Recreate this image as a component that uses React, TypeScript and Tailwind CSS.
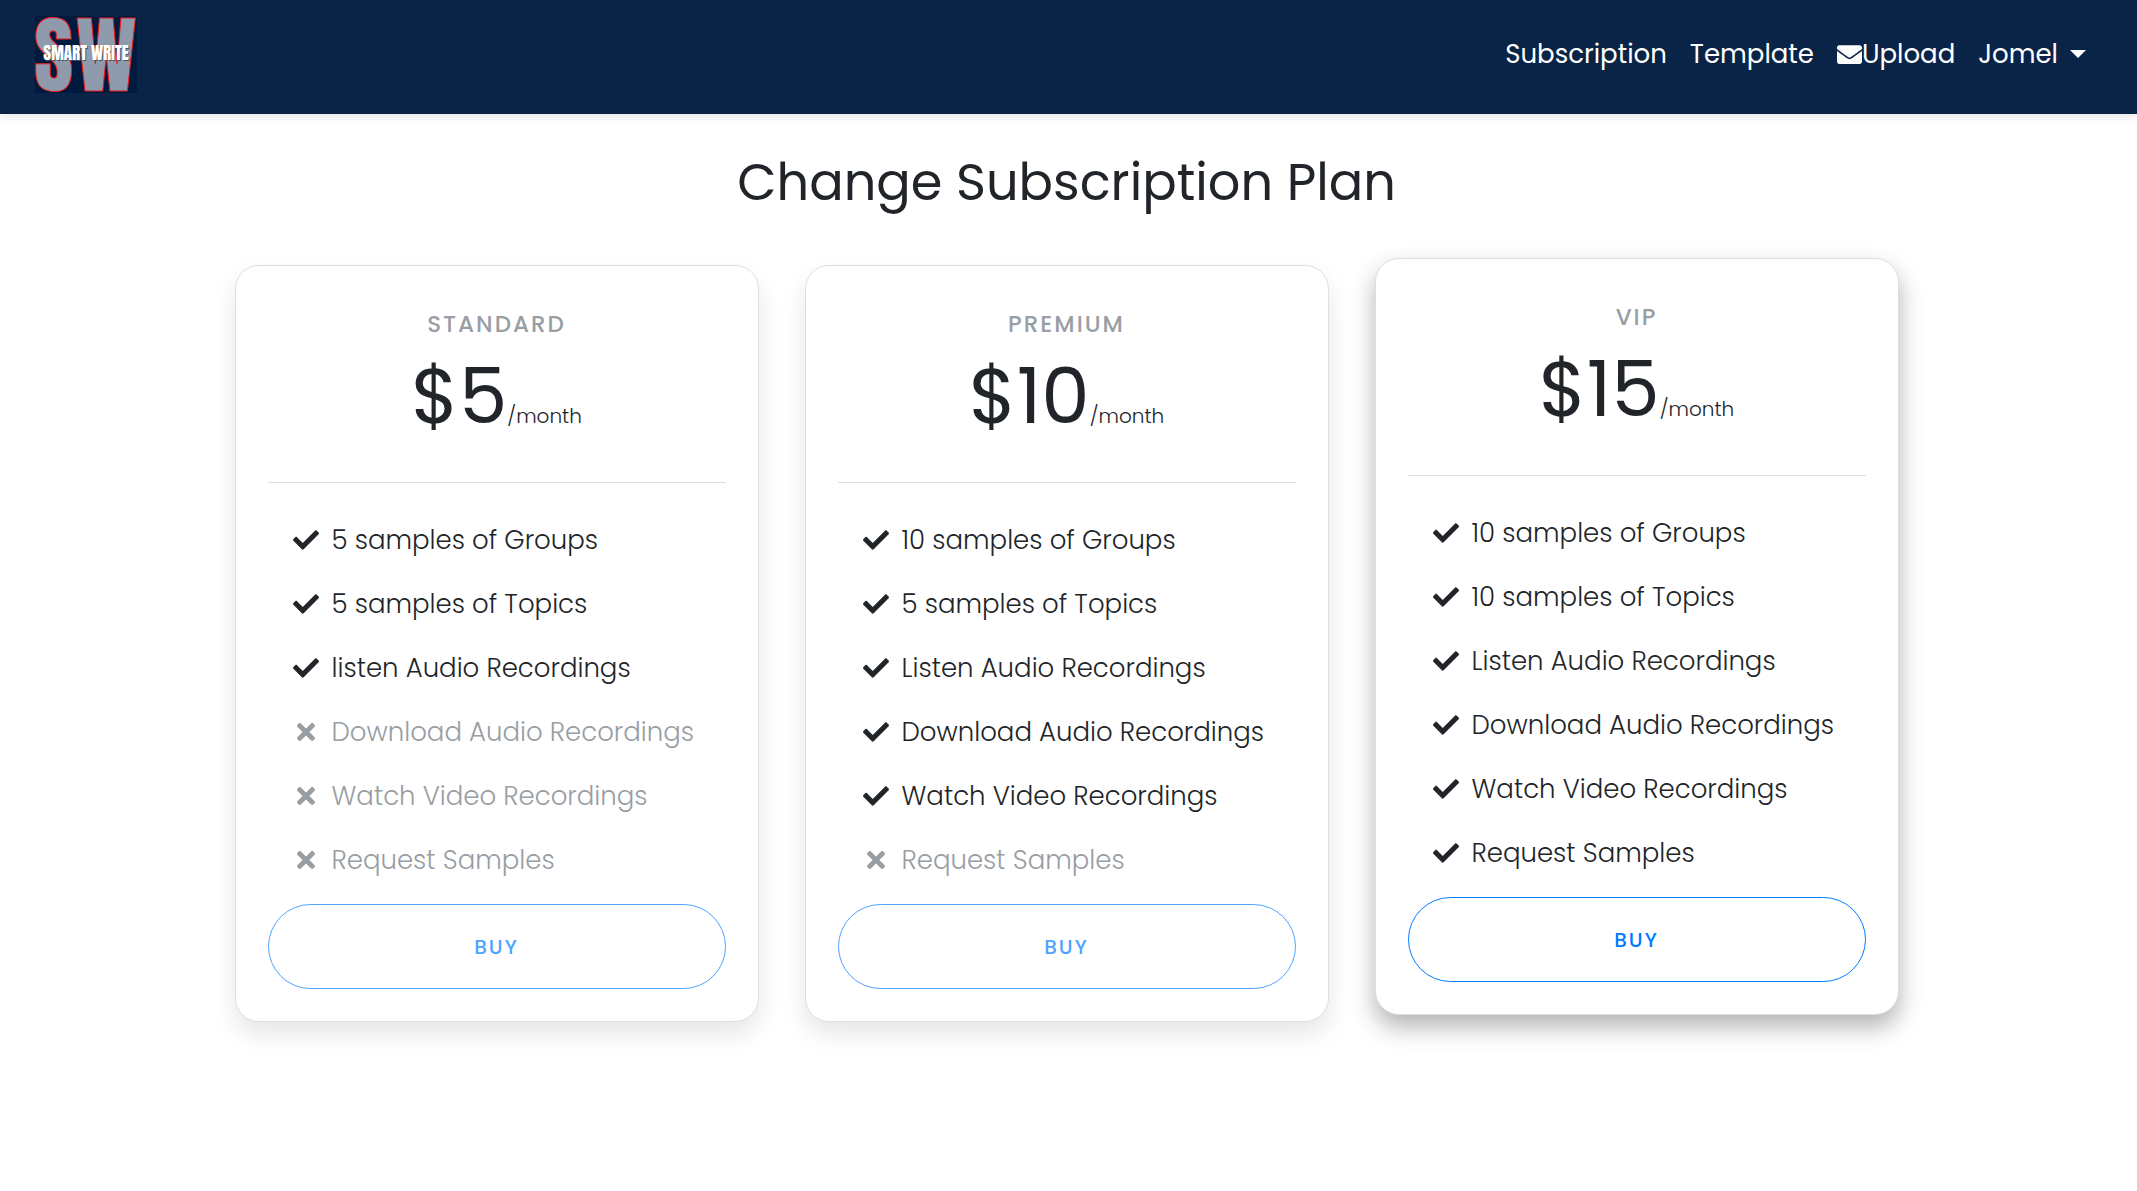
import React from "react";
import { FaCheck, FaTimes, FaEnvelope } from "react-icons/fa";

type Feature = { label: string; included: boolean };
type Plan = { name: string; price: string; features: Feature[]; active?: boolean };

const plans: Plan[] = [
  {
    name: "STANDARD",
    price: "$5",
    features: [
      { label: "5 samples of Groups", included: true },
      { label: "5 samples of Topics", included: true },
      { label: "listen Audio Recordings", included: true },
      { label: "Download Audio Recordings", included: false },
      { label: "Watch Video Recordings", included: false },
      { label: "Request Samples", included: false },
    ],
  },
  {
    name: "PREMIUM",
    price: "$10",
    features: [
      { label: "10 samples of Groups", included: true },
      { label: "5 samples of Topics", included: true },
      { label: "Listen Audio Recordings", included: true },
      { label: "Download Audio Recordings", included: true },
      { label: "Watch Video Recordings", included: true },
      { label: "Request Samples", included: false },
    ],
  },
  {
    name: "VIP",
    price: "$15",
    active: true,
    features: [
      { label: "10 samples of Groups", included: true },
      { label: "10 samples of Topics", included: true },
      { label: "Listen Audio Recordings", included: true },
      { label: "Download Audio Recordings", included: true },
      { label: "Watch Video Recordings", included: true },
      { label: "Request Samples", included: true },
    ],
  },
];

function Logo() {
  return (
    <svg viewBox="0 0 102 77" className="h-[77px] w-[102px]" role="img" aria-label="Smart Write">
      <rect width="102" height="77" fill="#001a3f" />
      <g
        className="font-['Anton','Impact','Roboto',sans-serif] font-normal"
        fill="#8f9aad"
        stroke="#f01818"
        strokeWidth="1"
        fontSize="85"
      >
        <text x="-1" y="75">S</text>
        <text x="41" y="75">W</text>
      </g>
      <text
        x="51"
        y="44"
        fontSize="17"
        textAnchor="middle"
        fill="#ffffff"
        className="font-['Anton','Impact','Roboto',sans-serif] font-normal [text-shadow:1px_1px_0_#4b5565]"
      >
        SMART WRITE
      </text>
    </svg>
  );
}

function PlanCard({ plan }: { plan: Plan }) {
  return (
    <article
      className={
        plan.active
          ? "relative -top-[7px] rounded-3xl border border-[#dfdfdf] bg-white p-8 shadow-[0_12px_24px_0_rgba(0,0,0,0.3)]"
          : "rounded-3xl border border-[#dfdfdf] bg-white p-8 shadow-[0_12px_24px_0_rgba(0,0,0,0.1)]"
      }
    >
      <h2 className="mt-2 text-center text-[23px] leading-[36px] font-medium tracking-[2px] text-[#989ea4]">
        {plan.name}
      </h2>
      <p className="mt-2 text-center text-[77px] leading-[92px]">
        {plan.price}
        <span className="text-[20px] font-light">/month</span>
      </p>
      <hr className="mt-5 mb-[37px] border-t border-[#dedede]" />
      <ul className="flex flex-col gap-6">
        {plan.features.map((f) => (
          <li
            key={f.label}
            className={
              f.included
                ? "flex items-center gap-3 pl-6 text-[26px] leading-[40px] font-light whitespace-nowrap"
                : "flex items-center gap-3 pl-6 text-[26px] leading-[40px] font-light whitespace-nowrap text-[#989ea4]"
            }
          >
            <span className="flex w-7 justify-center">
              {f.included ? <FaCheck className="size-[26px]" /> : <FaTimes className="size-[26px]" />}
            </span>
            {f.label}
          </li>
        ))}
      </ul>
      <button
        type="button"
        className={
          plan.active
            ? "mt-6 h-[85px] w-full rounded-full border border-[#007bff] text-[20px] font-medium tracking-[2px] text-[#007bff]"
            : "mt-6 h-[85px] w-full rounded-full border border-[#4da3ff] text-[20px] font-medium tracking-[2px] text-[#4da3ff]"
        }
      >
        BUY
      </button>
    </article>
  );
}

export default function App() {
  return (
    <div className="min-h-screen bg-white font-['Poppins','Inter',sans-serif] text-[#212529]">
      <header className="flex items-start justify-between bg-[#0a2447] pt-4 pr-[51px] pb-[21px] pl-[35px] shadow-[0_3px_10px_rgba(0,0,0,0.1)]">
        <a href="#home">
          <Logo />
        </a>
        <nav className="flex items-center gap-[23px] pt-[18px] text-[26px] leading-[40px] text-white">
          <a href="#subscription">Subscription</a>
          <a href="#template">Template</a>
          <a href="#upload" className="flex items-center">
            <FaEnvelope className="size-[25px]" />
            Upload
          </a>
          <button type="button" className="flex items-center gap-3">
            Jomel
            <svg viewBox="0 0 16 8" className="h-2 w-4" fill="currentColor" aria-hidden="true">
              <path d="M0 0h16L8 8z" />
            </svg>
          </button>
        </nav>
      </header>
      <main className="mx-auto max-w-[1668px] pr-1">
        <h1 className="pt-9 text-center text-[51px] leading-[64px]">Change Subscription Plan</h1>
        <div className="mt-[51px] grid grid-cols-3 gap-[46px]">
          {plans.map((p) => (
            <PlanCard key={p.name} plan={p} />
          ))}
        </div>
      </main>
    </div>
  );
}
